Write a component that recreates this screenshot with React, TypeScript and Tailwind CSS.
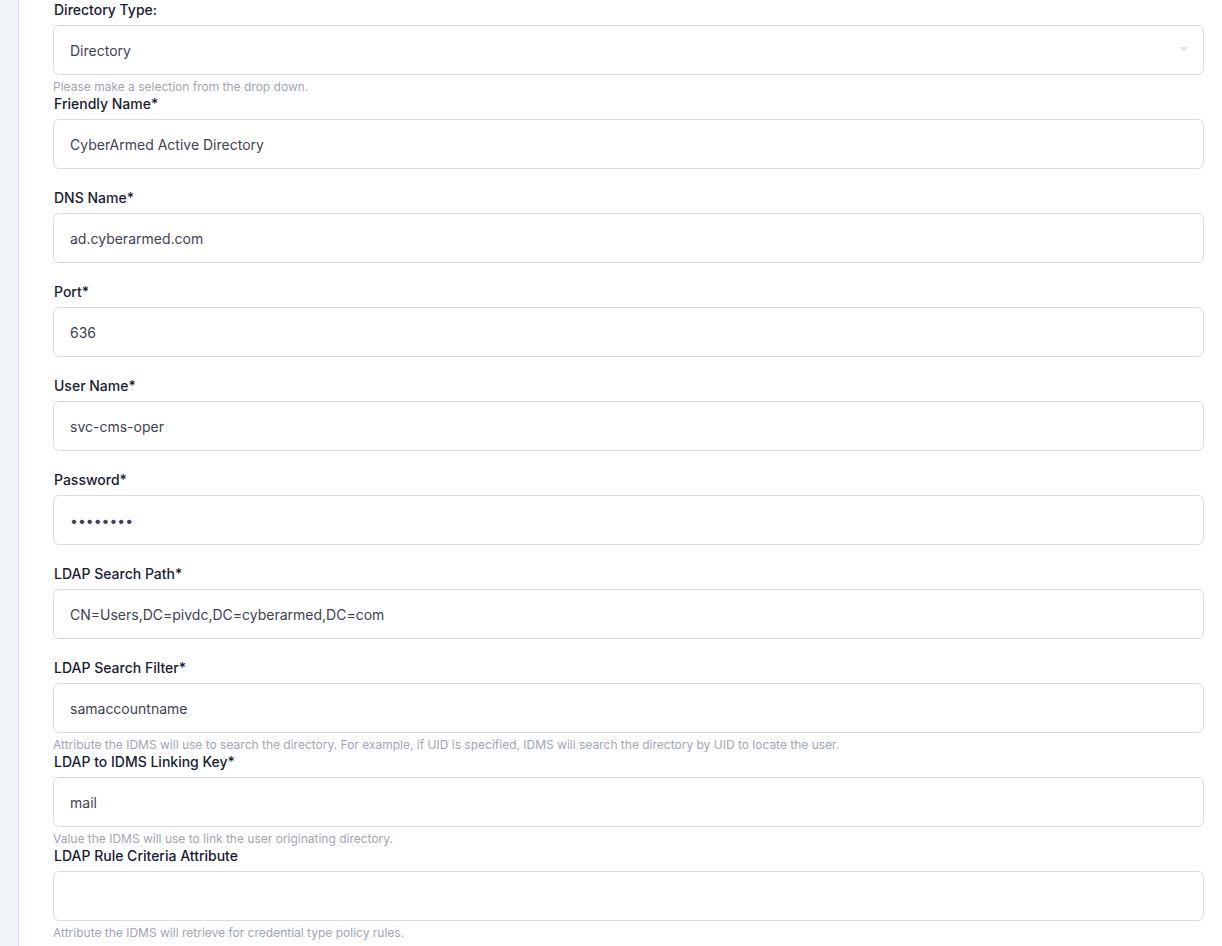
import React from 'react';

type Field = {
  label: string;
  value: string;
  help?: string;
  type?: 'text' | 'password' | 'select';
};

const fields: Field[] = [
  { label: 'Directory Type:', value: 'Directory', type: 'select', help: 'Please make a selection from the drop down.' },
  { label: 'Friendly Name*', value: 'CyberArmed Active Directory' },
  { label: 'DNS Name*', value: 'ad.cyberarmed.com' },
  { label: 'Port*', value: '636' },
  { label: 'User Name*', value: 'svc-cms-oper' },
  { label: 'Password*', value: 'password', type: 'password' },
  { label: 'LDAP Search Path*', value: 'CN=Users,DC=pivdc,DC=cyberarmed,DC=com' },
  {
    label: 'LDAP Search Filter*',
    value: 'samaccountname',
    help: 'Attribute the IDMS will use to search the directory. For example, if UID is specified, IDMS will search the directory by UID to locate the user.',
  },
  { label: 'LDAP to IDMS Linking Key*', value: 'mail', help: 'Value the IDMS will use to link the user originating directory.' },
  { label: 'LDAP Rule Criteria Attribute', value: '', help: 'Attribute the IDMS will retrieve for credential type policy rules.' },
];

const FormField: React.FC<{ field: Field }> = ({ field }) => {
  const base =
    'w-full h-[50px] rounded-[6px] border border-[#d9dce7] bg-white px-4 text-[14px] text-[#3f4254] outline-none';
  return (
    <div className="flex flex-col">
      <label className="h-5 leading-5 text-[14px] font-medium text-[#181c32] pl-px">{field.label}</label>
      <div className="mt-[5px] relative">
        {field.type === 'select' ? (
          <div className={`${base} flex items-center`}>
            <span>{field.value}</span>
            <svg className="absolute right-[16px] top-[22px] w-[9px] h-[5px]" viewBox="0 0 9 5">
              <path d="M0 0h9L4.5 5z" fill="#e6e7f0" />
            </svg>
          </div>
        ) : field.type === 'password' ? (
          <input type="password" readOnly defaultValue="abcdefgh" className={base} />
        ) : (
          <input type="text" readOnly defaultValue={field.value} className={base} />
        )}
      </div>
      <div className="h-[19px] pt-[5px] text-[12px] leading-[14px] text-[#a1a5b7]">{field.help}</div>
    </div>
  );
};

const App: React.FC = () => {
  return (
    <div className="flex min-h-screen bg-white" style={{ fontFamily: 'Inter, "Noto Sans", sans-serif' }}>
      {/* Sidebar strip */}
      <div className="w-[19px] shrink-0 bg-[#f1f4f9] border-r border-[#d6dbe5]" />
      <div className="flex-1 pl-[34px] pr-[18px]">
        {fields.map((f) => (
          <FormField key={f.label} field={f} />
        ))}
      </div>
    </div>
  );
};

export default App;
